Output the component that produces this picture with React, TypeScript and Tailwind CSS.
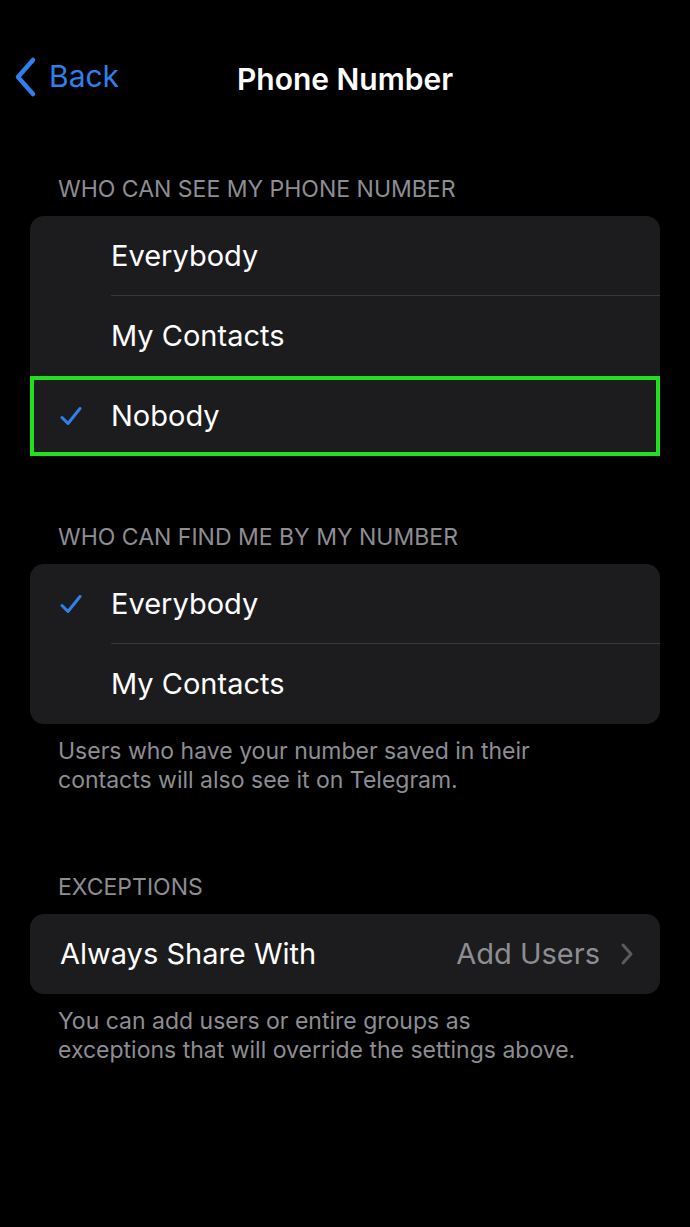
import React from "react";

const font = { fontFamily: "Inter, 'Liberation Sans', sans-serif" };

const Check = () => (
  <svg width="22" height="20" viewBox="0 0 22 20" fill="none">
    <path
      d="M2 11.5 L8 17.5 L20 2.5"
      stroke="#2f80ed"
      strokeWidth="3"
      strokeLinecap="round"
      strokeLinejoin="round"
    />
  </svg>
);

type Row = { label: string; checked?: boolean; highlight?: boolean };

const OptionGroup = ({ rows }: { rows: Row[] }) => (
  <div className="mx-[30px] rounded-[14px] bg-[#1c1c1e]">
    {rows.map((row, i) => (
      <div
        key={row.label}
        className={
          row.highlight
            ? "flex h-[80px] items-center border-4 border-[#22e01e] bg-[#1c1c1e]"
            : "flex h-[80px] items-center"
        }
      >
        <div
          className={
            row.highlight
              ? "flex w-[77px] items-center pl-[26px]"
              : "flex w-[81px] items-center pl-[30px]"
          }
        >
          {row.checked && <Check />}
        </div>
        <div
          className={
            i < rows.length - 1 && !rows[i + 1].highlight
              ? "flex h-full flex-1 items-center border-b border-[#38383a]"
              : "flex h-full flex-1 items-center"
          }
        >
          <span className="text-[29px] text-white">{row.label}</span>
        </div>
      </div>
    ))}
  </div>
);

const SectionHeader = ({ children }: { children: React.ReactNode }) => (
  <div className="mb-[13px] h-[28px] px-[58px] text-[23px] leading-[28px] uppercase text-[#8d8d93]">
    {children}
  </div>
);

const Footer = ({ children }: { children: React.ReactNode }) => (
  <div className="px-[58px] pt-[13px] text-[23px] leading-[29px] text-[#8d8d93]">
    {children}
  </div>
);

export default function App() {
  return (
    <div className="h-[1227px] w-[690px] bg-black" style={font}>
      <header className="relative flex h-[175px] items-start pt-[54px]">
        <div className="flex items-center pl-[13px]">
          <svg width="26" height="42" viewBox="0 0 26 42" fill="none">
            <path
              d="M20 4 L5 21 L20 38"
              stroke="#2f80ed"
              strokeWidth="4.5"
              strokeLinecap="round"
              strokeLinejoin="round"
            />
          </svg>
          <span className="ml-[10px] text-[30px] text-[#2f80ed]">Back</span>
        </div>
        <h1 className="absolute left-0 right-0 top-[57px] text-center text-[30px] font-semibold text-white">
          Phone Number
        </h1>
      </header>

      <SectionHeader>Who can see my phone number</SectionHeader>
      <OptionGroup
        rows={[
          { label: "Everybody" },
          { label: "My Contacts" },
          { label: "Nobody", checked: true, highlight: true },
        ]}
      />

      <div className="h-[67px]" />
      <SectionHeader>Who can find me by my number</SectionHeader>
      <OptionGroup
        rows={[{ label: "Everybody", checked: true }, { label: "My Contacts" }]}
      />
      <Footer>
        Users who have your number saved in their
        <br />
        contacts will also see it on Telegram.
      </Footer>

      <div className="h-[78px]" />
      <SectionHeader>Exceptions</SectionHeader>
      <div className="mx-[30px] flex h-[80px] items-center rounded-[14px] bg-[#1c1c1e] pl-[30px] pr-[26px]">
        <span className="flex-1 text-[29px] text-white">Always Share With</span>
        <span className="text-[29px] text-[#8d8d93]">Add Users</span>
        <svg className="ml-[20px]" width="14" height="24" viewBox="0 0 14 24" fill="none">
          <path
            d="M3 3 L11 12 L3 21"
            stroke="#5a5a5f"
            strokeWidth="3"
            strokeLinecap="round"
            strokeLinejoin="round"
          />
        </svg>
      </div>
      <Footer>
        You can add users or entire groups as
        <br />
        exceptions that will override the settings above.
      </Footer>
    </div>
  );
}
